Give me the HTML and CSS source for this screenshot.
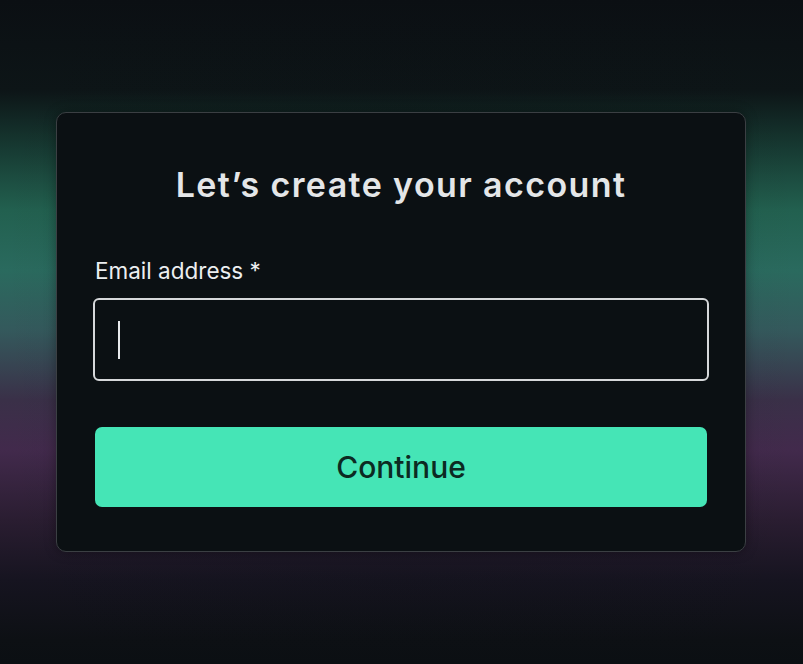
FILE: index.html
```html
<!DOCTYPE html>
<html lang="en">
<head>
<meta charset="utf-8">
<title>Create account</title>
<link rel="stylesheet" href="styles.css">
</head>
<body>
<main class="stage">
  <form class="card">
    <h1 class="title">Let’s create your account</h1>
    <label class="label" for="email">Email address *</label>
    <div class="field"><span class="caret"></span></div>
    <button type="button" class="btn">Continue</button>
  </form>
</main>
</body>
</html>
```
FILE: styles.css
```css
* { box-sizing: border-box; }
html, body { margin: 0; height: 100%; }
body {
  font-family: "Inter", "Noto Sans", sans-serif;
  background:
    linear-gradient(to right, rgba(11,15,19,0) 0%, rgba(11,15,19,0.15) 50%, rgba(11,15,19,0) 100%),
    linear-gradient(to bottom,
      #0b0f13 0px,
      #0d1517 90px,
      #173b33 150px,
      #22604f 210px,
      #2a6a5e 270px,
      #34595c 330px,
      #3a3048 400px,
      #422a4c 450px,
      #2a1d31 520px,
      #161420 580px,
      #0d1014 640px,
      #0b0f13 664px);
}
.stage {
  height: 664px;
  padding: 112px 57px 0 56px;
}
.card {
  display: flex;
  flex-direction: column;
  width: 690px;
  height: 440px;
  padding: 52px 37px 0 37px;
  background: #0b1013;
  border: 1.5px solid #3b3f43;
  border-radius: 10px;
  box-shadow: 0 0 12px rgba(0,0,0,0.35);
}
.title {
  margin: 0;
  text-align: center;
  font-size: 34px;
  line-height: 40px;
  font-weight: 600;
  color: #e4e6e8;
  letter-spacing: 1.4px;
}
.label {
  margin-top: 53px;
  padding-left: 1px;
  font-size: 22.5px;
  line-height: 26px;
  color: #eceef0;
}
.field {
  margin: 14px -1px 0 -1px;
  height: 83px;
  border: 2px solid #d6d8da;
  border-radius: 6px;
  display: flex;
  align-items: center;
  padding-left: 23px;
}
.caret {
  width: 2px;
  height: 38px;
  background: #e8eaec;
}
.btn {
  margin: 46px 1px 0 1px;
  height: 80px;
  border: 0;
  border-radius: 7px;
  background: #45e5b6;
  color: #0c2a22;
  font-family: inherit;
  font-size: 30px;
  font-weight: 500;
}
```
